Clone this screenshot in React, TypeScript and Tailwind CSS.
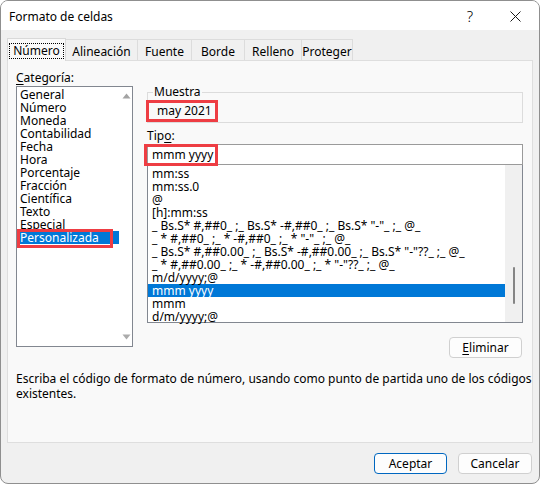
import React from 'react';

const categorias = [
  'General',
  'Número',
  'Moneda',
  'Contabilidad',
  'Fecha',
  'Hora',
  'Porcentaje',
  'Fracción',
  'Científica',
  'Texto',
  'Especial',
  'Personalizada',
];

const tipos = [
  'mm:ss',
  'mm:ss.0',
  '@',
  '[h]:mm:ss',
  '_ Bs.S* #,##0_ ;_ Bs.S* -#,##0_ ;_ Bs.S* "-"_ ;_ @_',
  '_ * #,##0_ ;_ * -#,##0_ ;_ * "-"_ ;_ @_',
  '_ Bs.S* #,##0.00_ ;_ Bs.S* -#,##0.00_ ;_ Bs.S* "-"??_ ;_ @_',
  '_ * #,##0.00_ ;_ * -#,##0.00_ ;_ * "-"??_ ;_ @_',
  'm/d/yyyy;@',
  'mmm yyyy',
  'mmm',
  'd/m/yyyy;@',
];

const tabs = [
  { label: 'Alineación', w: 'w-[72px]' },
  { label: 'Fuente', w: 'w-[54px]' },
  { label: 'Borde', w: 'w-[53px]' },
  { label: 'Relleno', w: 'w-[57px]' },
  { label: 'Proteger', w: 'w-[51px]' },
];

function Arrow({ down }: { down?: boolean }) {
  return (
    <svg width="9" height="6" viewBox="0 0 9 6">
      {down ? <path d="M0.5 0.5 L8.5 0.5 L4.5 5.5 Z" fill="#ababab" /> : <path d="M0.5 5.5 L8.5 5.5 L4.5 0.5 Z" fill="#a3a3a3" />}
    </svg>
  );
}

export default function App() {
  return (
    <div
      className="w-[540px] h-[484px] bg-[#f0f0f0] border border-[#8f8f8f] rounded-[8px] overflow-hidden flex flex-col text-[12px] text-black"
      style={{ fontFamily: '"Noto Sans", "Open Sans", sans-serif' }}
    >
      {/* barra de título */}
      <div className="h-[29px] bg-white flex items-center shrink-0">
        <span className="pl-[8px] leading-[15px] pt-[2px]">Formato de celdas</span>
        <div className="ml-auto flex items-center h-full">
          <span className="w-[20px] text-center text-[15px] font-light leading-none pt-[2px]">?</span>
          <div className="w-[46px] flex justify-center ml-[12px] mr-[1px] pt-[1px]">
            <svg width="11" height="11" viewBox="0 0 11 11">
              <path d="M0.5 0.5 L10.5 10.5 M10.5 0.5 L0.5 10.5" stroke="#1a1a1a" strokeWidth="1" />
            </svg>
          </div>
        </div>
      </div>

      <div className="px-[6px] pt-[7px]">
        {/* pestañas */}
        <div className="h-[23px] flex items-end">
          <div className="relative z-10 -mb-px h-[23px] w-[59px] bg-[#f9f9f9] border border-b-0 border-[#d9d9d9] flex items-center justify-center pt-[1px]">
            <span className="border border-dotted border-black px-[3px] leading-[14px]">Número</span>
          </div>
          {tabs.map(t => (
            <div
              key={t.label}
              className={`h-[21px] ${t.w} bg-[#f0f0f0] border border-l-0 border-b-0 border-[#dcdcdc] flex items-center justify-center pt-[3px] leading-[15px]`}
            >
              {t.label}
            </div>
          ))}
        </div>

        {/* panel */}
        <div className="h-[383px] bg-[#f9f9f9] border border-[#dedede] pt-[9px] pl-[8px]">
          <div className="flex">
            {/* categoría */}
            <div className="w-[117px]">
              <div className="leading-[15px]">
                <u className="underline-offset-[2px]">C</u>ategoría:
              </div>
              <div className="relative mt-[1px] h-[261px] bg-white border border-[#828790] flex">
                <div className="flex-1 pt-[1px]">
                  {categorias.map(c => (
                    <div
                      key={c}
                      className={`h-[13px] leading-[13px] pl-[3px] ${c === 'Personalizada' ? 'bg-[#0078d7] text-white' : ''}`}
                    >
                      {c}
                    </div>
                  ))}
                </div>
                <div className="w-[13px] flex flex-col items-center justify-between py-[6px] pl-[1px]">
                  <Arrow />
                  <Arrow down />
                </div>
                <div className="absolute left-0 top-[142px] w-[96px] h-[19px] border-[3px] border-[#ee3d43]" />
              </div>
            </div>

            {/* muestra y tipo */}
            <div className="relative ml-[14px] mt-[14px] w-[376px] flex flex-col">
              <fieldset className="border border-[#dcdcdc] h-[39px]">
                <legend className="ml-[5px] px-[1px] leading-[16px]">Muestra</legend>
                <div className="pl-[9px] pt-[3px] leading-[15px]">may 2021</div>
              </fieldset>
              <div className="mt-[5px] leading-[15px]">
                Tip<u className="underline-offset-[2px]">o</u>:
              </div>
              <div className="mt-[1px] h-[21px] bg-white border border-[#9a9a9a] pl-[4px] leading-[19px]">mmm yyyy</div>
              <div className="h-[158px] bg-white border border-t-0 border-[#828790] flex">
                <div className="flex-1 pt-[2px]">
                  {tipos.map(t => (
                    <div
                      key={t}
                      className={`h-[13px] leading-[13px] pl-[4px] whitespace-pre ${t === 'mmm yyyy' ? 'bg-[#0078d7] text-white' : ''}`}
                    >
                      {t}
                    </div>
                  ))}
                </div>
                <div className="w-[17px] bg-[#f0f0f0] flex justify-center">
                  <div className="w-[2px] h-[37px] mt-[102px] rounded-full bg-[#858585]" />
                </div>
              </div>
              <button className="self-end mr-[1px] mt-[14px] w-[73px] h-[21px] bg-[#fdfdfd] border border-[#d0d0d0] rounded-[4px] leading-[15px]">
                <u className="underline-offset-[2px]">E</u>liminar
              </button>
              <div className="absolute -left-[1px] top-[16px] w-[72px] h-[22px] border-[3px] border-[#ee3d43]" />
              <div className="absolute -left-[3px] top-[60px] w-[74px] h-[22px] border-[3px] border-[#ee3d43]" />
            </div>
          </div>

          <p className="mt-[13px] leading-[15px]">
            Escriba el código de formato de número, usando como punto de partida uno de los códigos
            <br />
            existentes.
          </p>
        </div>
      </div>

      {/* botones */}
      <div className="mt-[10px] flex justify-end gap-[11px] pr-[7px]">
        <button className="w-[73px] h-[21px] bg-[#fdfdfd] border border-[#0067c0] rounded-[4px] leading-[15px]">Aceptar</button>
        <button className="w-[74px] h-[21px] bg-[#fdfdfd] border border-[#d0d0d0] rounded-[4px] leading-[15px]">Cancelar</button>
      </div>
    </div>
  );
}
